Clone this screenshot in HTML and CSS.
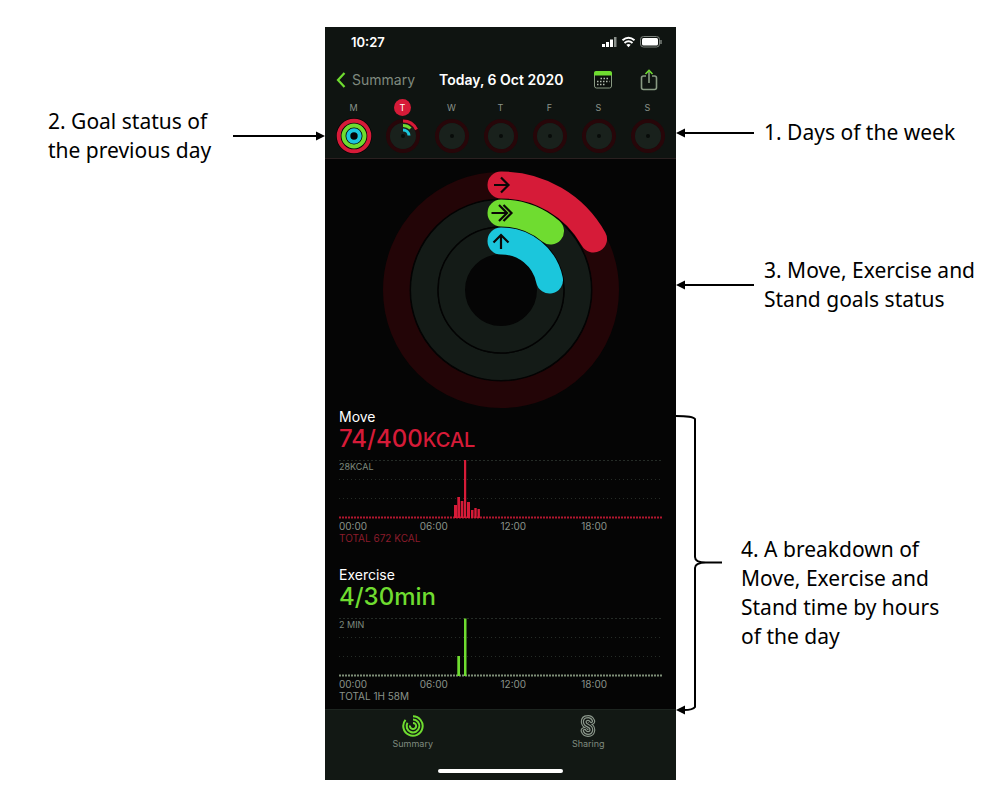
FILE: index.html
```html
<!DOCTYPE html>
<html lang="en">
<head>
<meta charset="utf-8">
<meta name="viewport" content="width=device-width, initial-scale=1">
<title>Activity summary guide</title>
<link rel="stylesheet" href="styles.css">
</head>
<body>
<svg class="defs" aria-hidden="true">
  <symbol id="arrow-left" viewBox="0 0 78 10"><path d="M8 5H78" stroke="#000" stroke-width="2"/><path d="M0 5 9 .5v9z"/></symbol>
  <symbol id="day-empty" viewBox="0 0 36 36">
    <circle cx="18" cy="18" r="15" fill="none" stroke="#270609" stroke-width="4"/>
    <circle cx="18" cy="18" r="13" fill="#19211c"/>
    <circle cx="18" cy="18" r="2" fill="#080b09"/>
  </symbol>
  <defs><path id="s-curve" d="M14.200 6.200Q13 3.800 10.800 4 7.600 4.200 7.700 7 7.900 9.300 11 10.700 14.500 12.200 14.400 15 14.100 18 11 18 8.500 18 7.600 15.800"/></defs>
</svg>
<div class="guide">
  <aside class="side side-left">
    <div class="callout goal">
      <p>2. Goal status of<br>the previous day</p>
      <svg class="goal-arrow" viewBox="0 0 92 10"><path d="M0 5h84" stroke="#000" stroke-width="2"/><path d="M92 5 83 .5v9z"/></svg>
    </div>
  </aside>

  <main class="phone">
    <header class="top">
      <div class="status">
        <time>10:27</time>
        <svg width="60" height="12" viewBox="0 0 60 12">
          <path fill="#fff" d="M0 8h3v3H0zM4 6h3v5H4zM8 3.500h3V11H8z"/><path fill="#8b918c" d="M12 1h2.500v10H12z"/>
          <g fill="none" stroke="#fff" stroke-width="2"><path d="M20.500 4.200q6-5 12 0M22.500 7q4-3.400 8 0"/></g>
          <path fill="#fff" d="m24.300 8.700 2.200 2.500 2.200-2.500q-2.200-1.600-4.400 0z"/>
          <rect x="38.500" y=".5" width="19" height="10.500" rx="3" fill="none" stroke="#7c827d"/><rect x="40" y="2" width="16" height="7.500" rx="1.500" fill="#fff"/><path d="M59 4v4" stroke="#7c827d" stroke-width="1.500"/>
        </svg>
      </div>
      <nav class="nav">
        <button class="back" type="button"><svg width="10" height="16" viewBox="0 0 10 16"><path d="M8.500 1 2 8l6.500 7" fill="none" stroke="#6fdc30" stroke-width="2.200"/></svg>Summary</button>
        <h1>Today, 6 Oct 2020</h1>
        <button type="button" aria-label="Calendar"><svg width="20" height="20" viewBox="0 0 20 20"><rect x="1.500" y="2" width="17" height="16" rx="2" fill="#0b0f0c" stroke="#899a83"/><path d="M1 5.500V3q0-2 2-2h14q2 0 2 2v2.500z" fill="#6fdc30"/><path d="M7.500 8.500h9M4 11.500h12.500M4 14.500h9" stroke="#b4bdb0" stroke-width="1.500" stroke-dasharray="1.500 1.500"/></svg></button>
        <button type="button" aria-label="Share"><svg width="18" height="22" viewBox="0 0 18 22" fill="none" stroke="#899a83" stroke-width="1.600"><path d="M6 7H3.500Q1.500 7 1.500 9v9.500q0 2 2 2h11q2 0 2-2V9q0-2-2-2H12"/><path d="M9 14V3"/><path d="M5.500 5 9 1.500 12.500 5" stroke="#6fdc30"/></svg></button>
      </nav>
      <ol class="week">
        <li><span>M</span><svg viewBox="0 0 36 36"><circle cx="18" cy="18" r="18" fill="#050505"/><g fill="none" stroke-width="4"><circle cx="18" cy="18" r="15.300" stroke="#d61b38"/><circle cx="18" cy="18" r="10.500" stroke="#6fdc30"/><circle cx="18" cy="18" r="5.700" stroke="#1bc6dc"/></g></svg></li>
        <li><span class="today">T</span><svg viewBox="0 0 36 36"><use href="#day-empty"/><g fill="none" stroke-width="3"><path d="M18 3a15 15 0 0 1 13.500 8.500" stroke="#d61b38"/><path d="M18 7.500a10.500 10.500 0 0 1 7.500 3" stroke="#6fdc30"/><path d="M18 12a6 6 0 0 1 6 5.500" stroke="#1bc6dc"/></g></svg></li>
        <li><span>W</span><svg viewBox="0 0 36 36"><use href="#day-empty"/></svg></li>
        <li><span>T</span><svg viewBox="0 0 36 36"><use href="#day-empty"/></svg></li>
        <li><span>F</span><svg viewBox="0 0 36 36"><use href="#day-empty"/></svg></li>
        <li><span>S</span><svg viewBox="0 0 36 36"><use href="#day-empty"/></svg></li>
        <li><span>S</span><svg viewBox="0 0 36 36"><use href="#day-empty"/></svg></li>
      </ol>
    </header>

    <svg class="rings" viewBox="0 0 238 238" role="img" aria-label="Move, Exercise and Stand rings">
      <g fill="none" stroke-width="27">
        <circle cx="119" cy="119" r="104.500" stroke="#230507"/>
        <circle cx="119" cy="119" r="77" stroke="#141b17"/>
        <circle cx="119" cy="119" r="49.500" stroke="#141b17"/>
        <circle cx="119" cy="119" r="90.700" stroke="#030303" stroke-width="1.500"/>
        <circle cx="119" cy="119" r="63" stroke="#030303" stroke-width="1.500"/>
        <g stroke-linecap="round">
          <path d="M119 14a105 105 0 0 1 92.500 54" stroke="#d61b38"/>
          <path d="M119 42a77 77 0 0 1 49.500 18" stroke="#6fdc30"/>
          <path d="M119 70a49 49 0 0 1 48.500 39" stroke="#1bc6dc"/>
        </g>
      </g>
      <g fill="none" stroke="#0b0706" stroke-width="2.200">
        <path d="M112 14h14M119 6.500l7.500 7.500-7.500 7.500"/>
        <path d="M109.500 42h14M117 34l8 8-8 8M121.500 34l8 8-8 8"/>
        <path d="M119 78V64M111.500 71.500 119 64l7.500 7.500"/>
      </g>
    </svg>

    <section class="metric move">
      <h2>Move</h2>
      <p class="value">74/400<small>KCAL</small></p>
      <div class="chart">
        <svg viewBox="0 0 323 60" preserveAspectRatio="none">
          <path class="grid" d="M0 1.500h323"/><path class="grid faint" d="M0 20.500h323M0 39.500h323"/>
          <path class="base" d="M0 58.500h323"/>
          <path class="bars" d="M115 46h3v13h-3zM118.300 38h2.700v21h-2.700zM121.700 42h2.700v17h-2.700zM125 1h2.200v58H125zM128 43h3v16h-3zM132 51h2.500v8H132zM135.300 49h2.400v10h-2.400zM138.500 50h2.400v9h-2.400z"/>
        </svg>
        <span>28KCAL</span>
      </div>
      <div class="hours"><span>00:00</span><span>06:00</span><span>12:00</span><span>18:00</span></div>
      <p class="total">TOTAL 672 KCAL</p>
    </section>

    <section class="metric exercise">
      <h2>Exercise</h2>
      <p class="value">4/30min</p>
      <div class="chart">
        <svg viewBox="0 0 323 60" preserveAspectRatio="none">
          <path class="grid" d="M0 1.500h323"/><path class="grid faint" d="M0 20.500h323M0 39.500h323"/>
          <path class="base" d="M0 58.500h323"/>
          <path class="bars" d="M118.300 39h2.700v20h-2.700zM125 1.500h2.500V59H125z"/>
        </svg>
        <span>2 MIN</span>
      </div>
      <div class="hours"><span>00:00</span><span>06:00</span><span>12:00</span><span>18:00</span></div>
      <p class="total">TOTAL 1H 58M</p>
    </section>

    <footer class="tabs">
      <nav>
        <a href="#summary"><svg width="22" height="22" viewBox="0 0 22 22" fill="none" stroke="#6fdc30" stroke-width="2"><path d="M11 1.300A9.700 9.700 0 1 1 3.500 4.800"/><path d="M11 4.600A6.400 6.400 0 1 1 5.500 7.700"/><path d="M11 7.900A3.100 3.100 0 1 1 8 10.500"/></svg>Summary</a>
        <a href="#sharing"><svg width="22" height="22" viewBox="0 0 22 22" fill="none" stroke-linecap="round"><use href="#s-curve" stroke="#8b978b" stroke-width="7.800"/><use href="#s-curve" stroke="#111613" stroke-width="5.600"/><use href="#s-curve" stroke="#8b978b" stroke-width="3.800"/><use href="#s-curve" stroke="#111613" stroke-width="1.400"/></svg>Sharing</a>
      </nav>
      <div class="home"></div>
    </footer>
  </main>

  <aside class="side side-right">
    <div class="callout">
      <svg class="arrow"><use href="#arrow-left"/></svg>
      <p>1. Days of the week</p>
    </div>
    <div class="callout status-note">
      <svg class="arrow"><use href="#arrow-left"/></svg>
      <p>3. Move, Exercise and<br>Stand goals status</p>
    </div>
    <div class="callout breakdown">
      <svg class="bracket" viewBox="0 0 46 302"><g fill="none" stroke="#000" stroke-width="2"><path d="M0 2q17 0 19 3v138q0 5.500 11 5.500h16M30 148.500q-11 0-11 5.500v139q-2 3-11 3"/></g><path d="M0 296l9-4.500v9z"/></svg>
      <p>4. A breakdown of<br>Move, Exercise and<br>Stand time by hours<br>of the day</p>
    </div>
  </aside>
</div>
</body>
</html>
```
FILE: styles.css
```css
* { box-sizing: border-box; }
body { margin: 0; background: #fff; color: #000; }
h1, h2, p, ol { margin: 0; padding: 0; font-weight: 400; }
svg { display: block; flex: none; }
.defs { width: 0; height: 0; position: absolute; }
button { padding: 0; border: 0; background: none; color: inherit; font: inherit; cursor: pointer; }

.guide {
  display: grid;
  grid-template-columns: 325fr 351fr 315fr;
  padding: 27px 0 20px;
}

/* Callouts beside the phone */
.side { font: 21px/29px "Noto Sans", "Open Sans", sans-serif; }
.callout { display: flex; align-items: center; white-space: nowrap; }
.side-left { padding-top: 80px; }
.goal { justify-content: space-between; padding-left: 48px; }
.goal-arrow { width: 92px; height: 10px; }
.side-right { padding-top: 91px; }
.arrow { width: 78px; height: 10px; margin-right: 10px; }
.status-note { margin-top: 109px; }
.breakdown { margin-top: 100px; align-items: flex-start; }
.bracket { width: 46px; height: 302px; margin-right: 19px; }
.breakdown p { padding-top: 121px; }

/* Phone */
.phone { background: #050505; color: #fff; font-family: Inter, sans-serif; min-width: 0; }
.top { background: #0f1411; border-bottom: 1px solid #2a2020; padding-bottom: 4px; }
.status { display: flex; justify-content: space-between; align-items: center; height: 29px; padding: 0 14px 0 26px; font-size: 13px; font-weight: 600; }
.nav { display: flex; align-items: center; height: 47px; padding: 0 18px 0 11px; }
.back { display: flex; align-items: center; gap: 6px; color: #7f8a7f; font-size: 14px; margin-right: 24px; }
.nav h1 { flex: 1; font-size: 14px; font-weight: 600; white-space: nowrap; }
.nav button + button { margin-left: 27px; }
.week { display: grid; grid-template-columns: repeat(7, 1fr); padding: 0 4px; list-style: none; justify-items: center; }
.week li { display: flex; flex-direction: column; align-items: center; gap: 2px; }
.week span { width: 17px; height: 17px; border-radius: 50%; font-size: 9px; line-height: 17px; text-align: center; color: #8a938a; margin-top: -4px; }
.week .today { background: #d61b38; color: #fff; }
.week svg { width: 36px; height: 36px; }
.rings { width: 238px; height: 238px; margin: 12px auto 0; }

.metric { padding: 0 14px; height: 158px; }
.metric h2 { font-size: 14px; line-height: 16px; }
.value { display: flex; align-items: baseline; height: 28px; font-size: 24px; line-height: 28px; font-weight: 500; }
.value small { font-size: 20px; line-height: 24px; }
.chart { display: grid; margin-top: 6px; }
.chart > * { grid-area: 1 / 1; }
.chart svg { width: 100%; height: 60px; }
.chart span { font-size: 9px; line-height: 12px; padding-top: 2px; color: #7f8a7f; }
.grid { stroke: #252c27; stroke-dasharray: 2 2; }
.faint { stroke-dasharray: 1 3; }
.base { stroke-width: 2; stroke-dasharray: 2 1; }
.move .value { color: #d61b38; }
.move .base { stroke: #b0172f; }
.move .bars { fill: #d61b38; }
.move .total { color: #8a1c2b; }
.exercise .value { color: #6fdc30; }
.exercise .base { stroke: #7f8f78; }
.exercise .bars { fill: #6fdc30; }
.hours { display: grid; grid-template-columns: repeat(4, 1fr); padding-top: 1px; font-size: 10px; line-height: 12px; color: #8a938a; }
.total { font-size: 10px; line-height: 12px; color: #8a938a; }

.tabs { background: #121814; border-top: 1px solid #1d2520; margin-top: -16px; padding: 5px 0 7px; }
.tabs nav { display: grid; grid-template-columns: 1fr 1fr; }
.tabs a { display: flex; flex-direction: column; align-items: center; gap: 1px; color: #7f8a7f; font-size: 9px; line-height: 12px; text-decoration: none; }
.home { width: 125px; height: 4px; margin: 19px auto 0; border-radius: 2px; background: #fff; }
```
